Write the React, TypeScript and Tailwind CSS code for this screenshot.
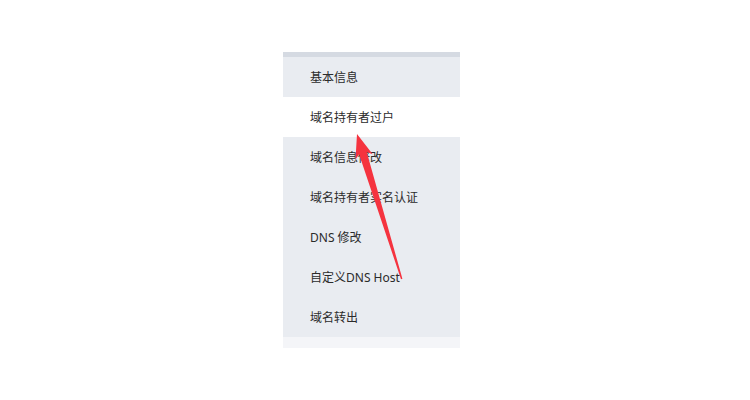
import React from "react";

const items = [
  { label: "基本信息", active: false },
  { label: "域名持有者过户", active: true },
  { label: "域名信息修改", active: false },
  { label: "域名持有者实名认证", active: false },
  { label: "DNS 修改", active: false },
  { label: "自定义DNS Host", active: false },
  { label: "域名转出", active: false },
];

export default function App() {
  return (
    <div
      className="relative w-[750px] h-[400px] bg-white overflow-hidden"
      style={{ fontFamily: '"Noto Sans", "Noto Sans CJK SC", sans-serif' }}
    >
      <div className="pt-[52px] pl-[283px]">
        <div className="w-[177px] flex flex-col">
          <div className="h-[5px] bg-[#d5dae2]" />
          {items.map((it) => (
            <div
              key={it.label}
              className={`h-[40px] flex items-center pl-[27px] pt-[2px] text-[12px] text-[#2b2b2b] ${
                it.active ? "bg-white" : "bg-[#e9ecf1]"
              }`}
            >
              {it.label}
            </div>
          ))}
          <div className="h-[11px] bg-[#f4f5f8]" />
        </div>
      </div>
      <svg
        className="absolute left-0 top-0 pointer-events-none"
        width="750"
        height="400"
        viewBox="0 0 750 400"
      >
        <polygon
          points="357,134 372.7,154.2 366.7,151.9 402.4,278.8 401,279.2 359.1,154.3 355.5,159.6"
          fill="#f5333f"
        />
      </svg>
    </div>
  );
}
